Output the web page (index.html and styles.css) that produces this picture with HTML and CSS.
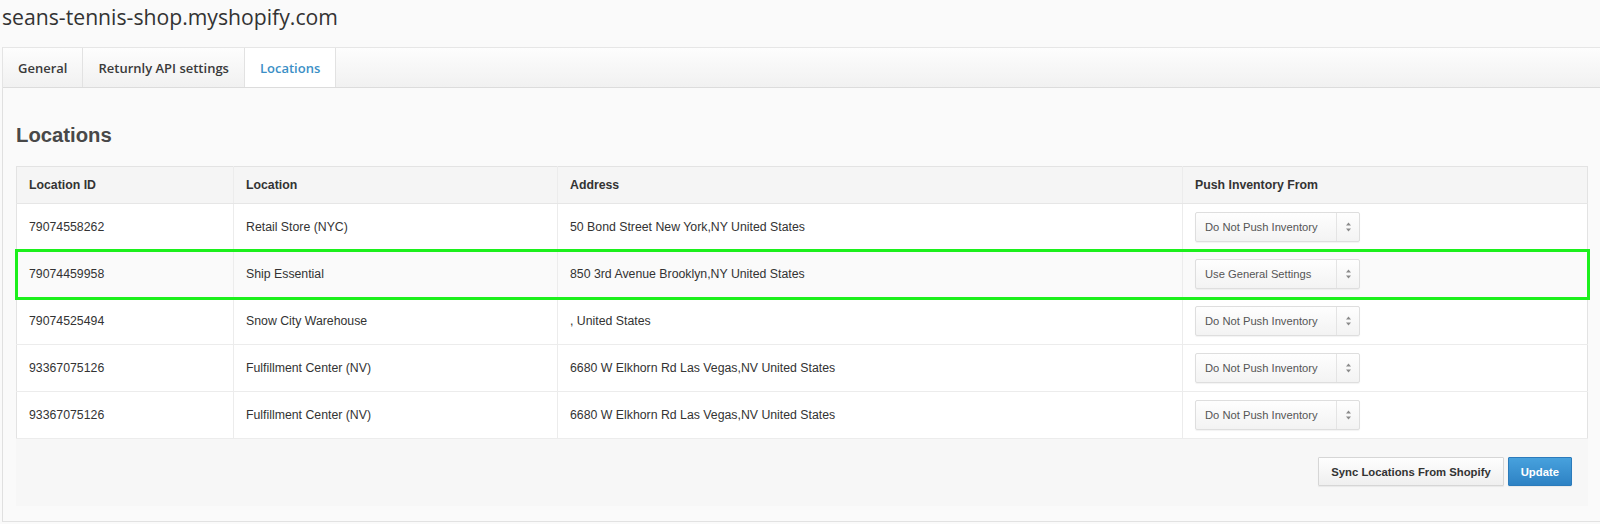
FILE: index.html
```html
<!DOCTYPE html>
<html lang="en">
<head>
<meta charset="utf-8">
<title>seans-tennis-shop.myshopify.com – Locations</title>
<link rel="stylesheet" href="styles.css">
</head>
<body>
  <h1 class="shop-title">seans-tennis-shop.myshopify.com</h1>

  <div class="settings">
    <nav class="tabs">
      <a class="tab">General</a>
      <a class="tab">Returnly API settings</a>
      <a class="tab tab-active">Locations</a>
    </nav>

    <section class="panel">
      <h2 class="panel-heading">Locations</h2>

      <table class="locations">
        <colgroup>
          <col class="col-id">
          <col class="col-name">
          <col class="col-address">
          <col class="col-push">
        </colgroup>
        <thead>
          <tr>
            <th>Location ID</th>
            <th>Location</th>
            <th>Address</th>
            <th>Push Inventory From</th>
          </tr>
        </thead>
        <tbody>
          <tr>
            <td>79074558262</td>
            <td>Retail Store (NYC)</td>
            <td>50 Bond Street New York,NY United States</td>
            <td><div class="select"><span class="select-label">Do Not Push Inventory</span><span class="select-arrows"><svg width="7" height="10" viewBox="0 0 7 10"><path d="M3.5 0.5 L6 3.5 H1 Z M3.5 9.5 L6 6.5 H1 Z" fill="#8a8a8a"/></svg></span></div></td>
          </tr>
          <tr class="row-highlight">
            <td>79074459958</td>
            <td>Ship Essential</td>
            <td>850 3rd Avenue Brooklyn,NY United States</td>
            <td><div class="select"><span class="select-label">Use General Settings</span><span class="select-arrows"><svg width="7" height="10" viewBox="0 0 7 10"><path d="M3.5 0.5 L6 3.5 H1 Z M3.5 9.5 L6 6.5 H1 Z" fill="#8a8a8a"/></svg></span></div></td>
          </tr>
          <tr>
            <td>79074525494</td>
            <td>Snow City Warehouse</td>
            <td>, United States</td>
            <td><div class="select"><span class="select-label">Do Not Push Inventory</span><span class="select-arrows"><svg width="7" height="10" viewBox="0 0 7 10"><path d="M3.5 0.5 L6 3.5 H1 Z M3.5 9.5 L6 6.5 H1 Z" fill="#8a8a8a"/></svg></span></div></td>
          </tr>
          <tr>
            <td>93367075126</td>
            <td>Fulfillment Center (NV)</td>
            <td>6680 W Elkhorn Rd Las Vegas,NV United States</td>
            <td><div class="select"><span class="select-label">Do Not Push Inventory</span><span class="select-arrows"><svg width="7" height="10" viewBox="0 0 7 10"><path d="M3.5 0.5 L6 3.5 H1 Z M3.5 9.5 L6 6.5 H1 Z" fill="#8a8a8a"/></svg></span></div></td>
          </tr>
          <tr>
            <td>93367075126</td>
            <td>Fulfillment Center (NV)</td>
            <td>6680 W Elkhorn Rd Las Vegas,NV United States</td>
            <td><div class="select"><span class="select-label">Do Not Push Inventory</span><span class="select-arrows"><svg width="7" height="10" viewBox="0 0 7 10"><path d="M3.5 0.5 L6 3.5 H1 Z M3.5 9.5 L6 6.5 H1 Z" fill="#8a8a8a"/></svg></span></div></td>
          </tr>
        </tbody>
      </table>

      <div class="panel-footer">
        <button class="btn">Sync Locations From Shopify</button>
        <button class="btn btn-primary">Update</button>
      </div>
    </section>
  </div>
</body>
</html>
```

FILE: styles.css
```css
html, body {
  margin: 0;
  padding: 0;
}

body {
  background: #fafafa;
  overflow: hidden;
  font-family: "Liberation Sans", Arial, sans-serif;
  color: #333;
}

/* Store domain heading */
.shop-title {
  margin: 0 0 13px;
  padding-left: 2px;
  font-family: "Open Sans", "Liberation Sans", sans-serif;
  font-weight: 400;
  font-size: 21.2px;
  line-height: 34px;
  color: #333;
}

/* Settings container */
.settings {
  margin-left: 2px;
  border-left: 1px solid #e4e4e4;
}

.tabs {
  display: flex;
  height: 39px;
  border-top: 1px solid #e6e6e6;
  border-bottom: 1px solid #dcdcdc;
  background: linear-gradient(#fdfdfd, #f1f1f1);
}

.tab {
  display: flex;
  align-items: center;
  padding: 0 15px;
  border-right: 1px solid #e2e2e2;
  font-family: "Open Sans", "Liberation Sans", sans-serif;
  font-weight: 600;
  font-size: 13px;
  color: #3a3a3a;
  cursor: pointer;
}

.tab-active {
  background: #fff;
  color: #3b8fc6;
}

/* Locations panel */
.panel {
  padding: 0 12px 15px 13px;
  background: #fafafa;
  border-bottom: 1px solid #e2e2e2;
  box-shadow: 0 1px 2px rgba(0, 0, 0, 0.05);
}

.panel-heading {
  margin: 0;
  padding: 35px 0 19px;
  font-size: 20.3px;
  line-height: 24px;
  font-weight: 700;
  color: #484848;
}

.locations {
  width: 100%;
  border-collapse: collapse;
  border: 1px solid #e3e3e3;
  background: #fff;
  font-size: 12.3px;
  color: #333;
}

.col-id { width: 217px; }
.col-name { width: 324px; }
.col-address { width: 625px; }

.locations th,
.locations td {
  padding: 0 12px;
  text-align: left;
  vertical-align: middle;
  border-left: 1px solid #ececec;
  border-bottom: 1px solid #ececec;
}

.locations th {
  height: 36px;
  background: #f5f5f5;
  font-weight: 700;
  color: #333;
  border-bottom-color: #e6e6e6;
}

.locations td {
  height: 46px;
}

.locations tr:first-child th:first-child,
.locations tr td:first-child {
  border-left: none;
}

.row-highlight td {
  background: #fafafa;
}

.row-highlight {
  outline: 3px solid #1cf01c;
  outline-offset: -1px;
}

/* Inventory source dropdown */
.select {
  display: flex;
  width: 163px;
  height: 28px;
  border: 1px solid #dedede;
  border-radius: 2px;
  background: linear-gradient(#fefefe, #f3f3f3);
  box-shadow: 0 1px 1px rgba(0, 0, 0, 0.05);
  font-size: 11.2px;
  color: #555;
  cursor: pointer;
}

.select-label {
  flex: 1;
  display: flex;
  align-items: center;
  padding-left: 9px;
}

.select-arrows {
  width: 22px;
  display: flex;
  align-items: center;
  justify-content: center;
  border-left: 1px solid #e4e4e4;
}

/* Footer actions */
.panel-footer {
  display: flex;
  justify-content: flex-end;
  gap: 4px;
  padding: 18px 16px 20px;
  background: #f7f7f7;
}

.btn {
  height: 29px;
  padding: 0 12px;
  border: 1px solid #d6d6d6;
  border-radius: 1px;
  background: linear-gradient(#fefefe, #efefef);
  box-shadow: 0 1px 1px rgba(0, 0, 0, 0.06);
  font-family: "Liberation Sans", Arial, sans-serif;
  font-weight: 700;
  font-size: 11.3px;
  color: #333;
  cursor: pointer;
}

.btn-primary {
  padding: 0 12px;
  border-color: #2b7bbb;
  background: linear-gradient(#47a1dd, #2e82c4);
  color: #fff;
}
```
